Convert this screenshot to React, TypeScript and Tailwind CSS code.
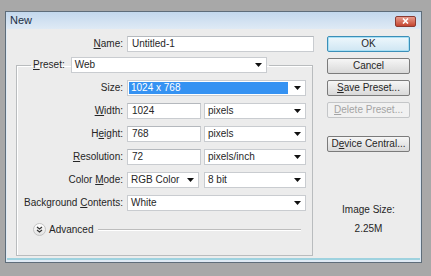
import React from "react";

// Small black dropdown caret used by the combo boxes
const Caret = () => (
  <svg width="7" height="4" viewBox="0 0 7 4" className="shrink-0">
    <path d="M0 0h7L3.5 4z" fill="#111" />
  </svg>
);

interface SelectProps {
  value: string;
  className?: string;
  highlight?: boolean;
}

const Select = ({ value, className = "", highlight }: SelectProps) => (
  <div
    className={`flex h-[16px] items-center border border-[#c9ccd0] bg-white pl-[1px] pr-[4px] ${className}`}
  >
    <span
      className={`flex h-[12px] flex-1 items-center pl-[2px] leading-none ${
        highlight ? "mr-[6px] bg-[#3592f2] text-white" : ""
      }`}
    >
      {value}
    </span>
    <Caret />
  </div>
);

const Input = ({ value, className = "" }: { value: string; className?: string }) => (
  <div
    className={`flex h-[16px] items-center border border-[#c9ccd0] border-t-[#b4b8bd] bg-white pl-[4px] leading-none ${className}`}
  >
    {value}
  </div>
);

// Label with an underlined accelerator letter
const Label = ({ pre = "", acc = "", post, className = "" }: { pre?: string; acc?: string; post: string; className?: string }) => (
  <span className={`text-right leading-none ${className}`}>
    {pre}
    {acc && <u className="underline-offset-[1px]">{acc}</u>}
    {post}
  </span>
);

interface ButtonProps {
  children: React.ReactNode;
  primary?: boolean;
  disabled?: boolean;
}

const Button = ({ children, primary, disabled }: ButtonProps) => (
  <div
    className={`flex h-[16px] items-center justify-center rounded-[2px] border leading-none ${
      primary
        ? "border-[#3c8fb8] bg-gradient-to-b from-[#eef7fc] to-[#cfe6f3] shadow-[inset_0_0_0_1px_#a9e0f5]"
        : disabled
        ? "border-[#c4c6c8] bg-[#f1f1f1] text-[#a4a4a4]"
        : "border-[#7b7b7b] bg-gradient-to-b from-[#f6f6f6] to-[#d9d9d9]"
    }`}
  >
    {children}
  </div>
);

const Row = ({ label, children }: { label: React.ReactNode; children: React.ReactNode }) => (
  <div className="flex items-center gap-[4px]">
    <div className="flex w-[106px] justify-end">{label}</div>
    <div className="flex w-[179px] items-center">{children}</div>
  </div>
);

export default function App() {
  return (
    <div
      className="h-[276px] w-[431px] bg-[#a8a8a8] pl-[5px] pt-[11px] text-[10px] text-[#262626]"
      style={{ fontFamily: '"Liberation Sans", Arial, sans-serif' }}
    >
      {/* Window */}
      <div className="flex h-[252px] w-[417px] flex-col border border-[#5e6d7a] bg-[#dfeaf4]">
        {/* Title bar */}
        <div className="flex h-[17px] shrink-0 items-center justify-between bg-gradient-to-b from-[#c3d8ed] to-[#dfeaf5] pl-[4px] pr-[5px]">
          <span className="text-[11px] leading-none text-[#1b2f45]">New</span>
          <div className="mt-[1px] flex h-[11px] w-[21px] items-center justify-center rounded-[2px] border border-[#8a3b33] bg-gradient-to-b from-[#e79a8c] to-[#c4442f]">
            <svg width="7" height="6" viewBox="0 0 7 6">
              <path d="M1 0.5l5 5M6 0.5l-5 5" stroke="#fff" strokeWidth="1.6" />
            </svg>
          </div>
        </div>

        {/* Client area */}
        <div className="mx-[1px] mb-[2px] flex flex-1 border-b-2 border-[#9ed2df] bg-[#ececec] pl-[9px] pt-[7px]">
          {/* Left column */}
          <div className="flex w-[298px] flex-col">
            <div className="flex items-center gap-[4px]">
              <div className="flex w-[107px] justify-end">
                <Label acc="N" post="ame:" />
              </div>
              <Input value="Untitled-1" className="w-[187px]" />
            </div>

            <fieldset className="mt-[5px] w-[297px] border border-[#b9bcbe] pb-[19px] shadow-[inset_1px_1px_0_#fff]">
              <legend className="ml-[14px] flex items-center gap-[6px] px-[2px]">
                <Label acc="P" post="reset:" />
                <Select value="Web" className="w-[196px]" />
              </legend>

              <div className="flex flex-col gap-[7px] pt-[7px]">
                <Row label={<Label post="Size:" />}>
                  <Select value="1024 x 768" highlight className="w-full" />
                </Row>
                <Row label={<Label acc="W" post="idth:" />}>
                  <Input value="1024" className="w-[74px]" />
                  <Select value="pixels" className="ml-[3px] flex-1" />
                </Row>
                <Row label={<Label pre="H" acc="e" post="ight:" />}>
                  <Input value="768" className="w-[74px]" />
                  <Select value="pixels" className="ml-[3px] flex-1" />
                </Row>
                <Row label={<Label acc="R" post="esolution:" />}>
                  <Input value="72" className="w-[74px]" />
                  <Select value="pixels/inch" className="ml-[3px] flex-1" />
                </Row>
                <Row label={<Label pre="Color " acc="M" post="ode:" />}>
                  <Select value="RGB Color" className="w-[72px]" />
                  <Select value="8 bit" className="ml-[5px] flex-1" />
                </Row>
                <Row label={<Label pre="Background " acc="C" post="ontents:" className="whitespace-nowrap" />}>
                  <Select value="White" className="w-full" />
                </Row>
              </div>

              {/* Advanced */}
              <div className="mt-[12px] flex items-center pl-[16px] pr-[11px]">
                <div className="flex h-[13px] w-[13px] items-center justify-center rounded-full border border-[#c3c3c3] bg-gradient-to-b from-[#ffffff] to-[#e2e2e2]">
                  <svg width="7" height="7" viewBox="0 0 7 7">
                    <path d="M1 1l2.5 2 2.5-2M1 4l2.5 2 2.5-2" stroke="#333" strokeWidth="1.2" fill="none" />
                  </svg>
                </div>
                <span className="ml-[3px] leading-none">Advanced</span>
                <div className="ml-[5px] h-[2px] flex-1 border-t border-b border-t-[#bdbdbd] border-b-white" />
              </div>
            </fieldset>
          </div>

          {/* Right column */}
          <div className="ml-[13px] flex w-[83px] flex-col">
            <div className="flex flex-col gap-[6px]">
              <Button primary>OK</Button>
              <Button>Cancel</Button>
              <Button>
                <u className="underline-offset-[1px]">S</u>ave Preset...
              </Button>
              <Button disabled>
                <u className="underline-offset-[1px]">D</u>elete Preset...
              </Button>
            </div>
            <div className="mt-[18px]">
              <Button>
                D<u className="underline-offset-[1px]">e</u>vice Central...
              </Button>
            </div>
            <div className="mt-[53px] text-center leading-none">Image Size:</div>
            <div className="mt-[9px] text-center leading-none">2.25M</div>
          </div>
        </div>
      </div>
    </div>
  );
}
